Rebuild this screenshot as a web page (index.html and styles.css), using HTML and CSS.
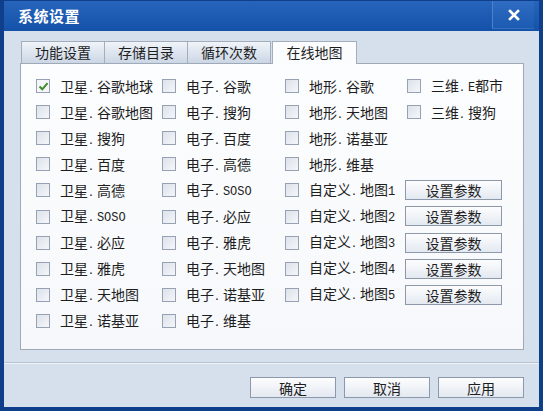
FILE: index.html
```html
<!DOCTYPE html>
<html lang="zh-CN">
<head>
    <meta charset="UTF-8">
    <title>系统设置</title>
    <link rel="stylesheet" href="styles.css">
</head>
<body>
    <div class="window">
        <div class="titlebar">
            <span class="title">系统设置</span>
            <div class="close-btn">
                <svg width="12" height="12" viewBox="0 0 12 12">
                    <path d="M2 2 L10 10 M10 2 L2 10" stroke="#fff" stroke-width="2.6" stroke-linecap="square"/>
                </svg>
            </div>
        </div>

        <div class="content">
            <div class="tabs">
                <div class="tab">功能设置</div>
                <div class="tab">存储目录</div>
                <div class="tab">循环次数</div>
                <div class="tab active">在线地图</div>
            </div>

            <div class="panel">
                <div class="map-grid">
                    <!-- row 1 -->
                    <label class="opt"><span class="cb checked"><svg width="11" height="11" viewBox="0 0 11 11"><path d="M1.5 5.5 L4.3 8.3 L9.5 2.2" fill="none" stroke="#3f8a2a" stroke-width="2"/></svg></span><span>卫星<span class="dot">.</span>谷歌地球</span></label>
                    <label class="opt"><span class="cb"></span><span>电子<span class="dot">.</span>谷歌</span></label>
                    <label class="opt"><span class="cb"></span><span>地形<span class="dot">.</span>谷歌</span></label>
                    <label class="opt"><span class="cb"></span><span>三维<span class="dot">.</span><span class="latin">E</span>都市</span></label>
                    <!-- row 2 -->
                    <label class="opt"><span class="cb"></span><span>卫星<span class="dot">.</span>谷歌地图</span></label>
                    <label class="opt"><span class="cb"></span><span>电子<span class="dot">.</span>搜狗</span></label>
                    <label class="opt"><span class="cb"></span><span>地形<span class="dot">.</span>天地图</span></label>
                    <label class="opt"><span class="cb"></span><span>三维<span class="dot">.</span>搜狗</span></label>
                    <!-- row 3 -->
                    <label class="opt"><span class="cb"></span><span>卫星<span class="dot">.</span>搜狗</span></label>
                    <label class="opt"><span class="cb"></span><span>电子<span class="dot">.</span>百度</span></label>
                    <label class="opt"><span class="cb"></span><span>地形<span class="dot">.</span>诺基亚</span></label>
                    <span></span>
                    <!-- row 4 -->
                    <label class="opt"><span class="cb"></span><span>卫星<span class="dot">.</span>百度</span></label>
                    <label class="opt"><span class="cb"></span><span>电子<span class="dot">.</span>高德</span></label>
                    <label class="opt"><span class="cb"></span><span>地形<span class="dot">.</span>维基</span></label>
                    <span></span>
                    <!-- row 5 -->
                    <label class="opt"><span class="cb"></span><span>卫星<span class="dot">.</span>高德</span></label>
                    <label class="opt"><span class="cb"></span><span>电子<span class="dot">.</span><span class="latin">SOSO</span></span></label>
                    <label class="opt"><span class="cb"></span><span>自定义<span class="dot">.</span>地图<span class="latin">1</span></span></label>
                    <div><button class="btn param-btn">设置参数</button></div>
                    <!-- row 6 -->
                    <label class="opt"><span class="cb"></span><span>卫星<span class="dot">.</span><span class="latin">SOSO</span></span></label>
                    <label class="opt"><span class="cb"></span><span>电子<span class="dot">.</span>必应</span></label>
                    <label class="opt"><span class="cb"></span><span>自定义<span class="dot">.</span>地图<span class="latin">2</span></span></label>
                    <div><button class="btn param-btn">设置参数</button></div>
                    <!-- row 7 -->
                    <label class="opt"><span class="cb"></span><span>卫星<span class="dot">.</span>必应</span></label>
                    <label class="opt"><span class="cb"></span><span>电子<span class="dot">.</span>雅虎</span></label>
                    <label class="opt"><span class="cb"></span><span>自定义<span class="dot">.</span>地图<span class="latin">3</span></span></label>
                    <div><button class="btn param-btn">设置参数</button></div>
                    <!-- row 8 -->
                    <label class="opt"><span class="cb"></span><span>卫星<span class="dot">.</span>雅虎</span></label>
                    <label class="opt"><span class="cb"></span><span>电子<span class="dot">.</span>天地图</span></label>
                    <label class="opt"><span class="cb"></span><span>自定义<span class="dot">.</span>地图<span class="latin">4</span></span></label>
                    <div><button class="btn param-btn">设置参数</button></div>
                    <!-- row 9 -->
                    <label class="opt"><span class="cb"></span><span>卫星<span class="dot">.</span>天地图</span></label>
                    <label class="opt"><span class="cb"></span><span>电子<span class="dot">.</span>诺基亚</span></label>
                    <label class="opt"><span class="cb"></span><span>自定义<span class="dot">.</span>地图<span class="latin">5</span></span></label>
                    <div><button class="btn param-btn">设置参数</button></div>
                    <!-- row 10 -->
                    <label class="opt"><span class="cb"></span><span>卫星<span class="dot">.</span>诺基亚</span></label>
                    <label class="opt"><span class="cb"></span><span>电子<span class="dot">.</span>维基</span></label>
                </div>
            </div>
        </div>

        <div class="footer">
            <button class="btn footer-btn">确定</button>
            <button class="btn footer-btn">取消</button>
            <button class="btn footer-btn">应用</button>
        </div>
    </div>
</body>
</html>
```

FILE: styles.css
```css
body {
    margin: 0;
    background-color: #d6e0ed;
    font-family: "Noto Sans CJK SC", "Liberation Sans", sans-serif;
    font-size: 14px;
    color: #1e1e1e;
}
.window {
    width: 543px;
    height: 411px;
    box-sizing: border-box;
    border: 4px solid #0f3f8a;
    border-top-width: 1px;
    background-color: #d6e0ed;
    display: flex;
    flex-direction: column;
}
.titlebar {
    height: 30px;
    flex-shrink: 0;
    display: flex;
    justify-content: space-between;
    background: linear-gradient(#2764bb, #1452aa);
    color: #fff;
}
.title {
    padding-left: 14px;
    line-height: 30px;
    font-size: 15px;
    font-weight: bold;
    letter-spacing: 0.5px;
}
.close-btn {
    width: 41px;
    height: 27px;
    margin-right: 5px;
    display: flex;
    align-items: center;
    justify-content: center;
    background: linear-gradient(#2f6cc2, #1c5bb2);
    border-left: 1px solid #4a82cf;
    border-bottom: 1px solid #3570c0;
}
.content {
    padding: 10px 15px 0 16px;
}
.tabs {
    display: flex;
    height: 22px;
    margin-left: 1px;
    position: relative;
    z-index: 1;
}
.tab {
    box-sizing: border-box;
    height: 22px;
    width: 84px;
    line-height: 20px;
    text-align: center;
    border: 1px solid #a3adbb;
    border-bottom: none;
    background: linear-gradient(#f0f4f9, #cbd6e5);
    margin-right: -1px;
}
.tab.active {
    width: 85px;
    height: 23px;
    margin-left: 2px;
    background: #fbfcfe;
}
.panel {
    box-sizing: border-box;
    width: 504px;
    height: 287px;
    border: 1px solid #9fa9b7;
    background: linear-gradient(#fcfdfe, #f6f8fb);
    padding: 9px 0 0 15px;
}
.map-grid {
    display: grid;
    grid-template-columns: 126px 123px 122px auto;
    grid-auto-rows: 26.1px;
}
.opt {
    display: flex;
    align-items: center;
    white-space: nowrap;
    line-height: 16px;
}
.cb {
    box-sizing: border-box;
    width: 14px;
    height: 14px;
    margin-right: 10px;
    border: 1px solid #96a2b3;
    background: linear-gradient(135deg, #dde2ea, #f4f6f9);
    display: flex;
    align-items: center;
    justify-content: center;
}
.cb.checked {
    background: #f4f6f9;
}
.dot {
    font-family: "Liberation Sans", sans-serif;
    padding: 0 4px 0 1px;
}
.latin {
    font-family: "Liberation Mono", monospace;
    font-size: 12px;
}
.btn {
    box-sizing: border-box;
    font-family: "Noto Sans CJK SC", "Liberation Sans", sans-serif;
    font-size: 14px;
    color: #1e1e1e;
    border: 1px solid #8d99aa;
    background: linear-gradient(#fdfdfe, #e3e9f1);
    padding: 0;
    line-height: 18px;
}
.param-btn {
    width: 97px;
    height: 20px;
    margin: 3px 0 0 -2px;
}
.footer {
    margin-top: 12px;
    border-top: 1px solid #b9c4d3;
    box-shadow: inset 0 1px 0 #eef2f8;
    padding: 14px 15px 0 0;
    display: flex;
    justify-content: flex-end;
    gap: 8px;
}
.footer-btn {
    width: 86px;
    height: 21px;
}
```
